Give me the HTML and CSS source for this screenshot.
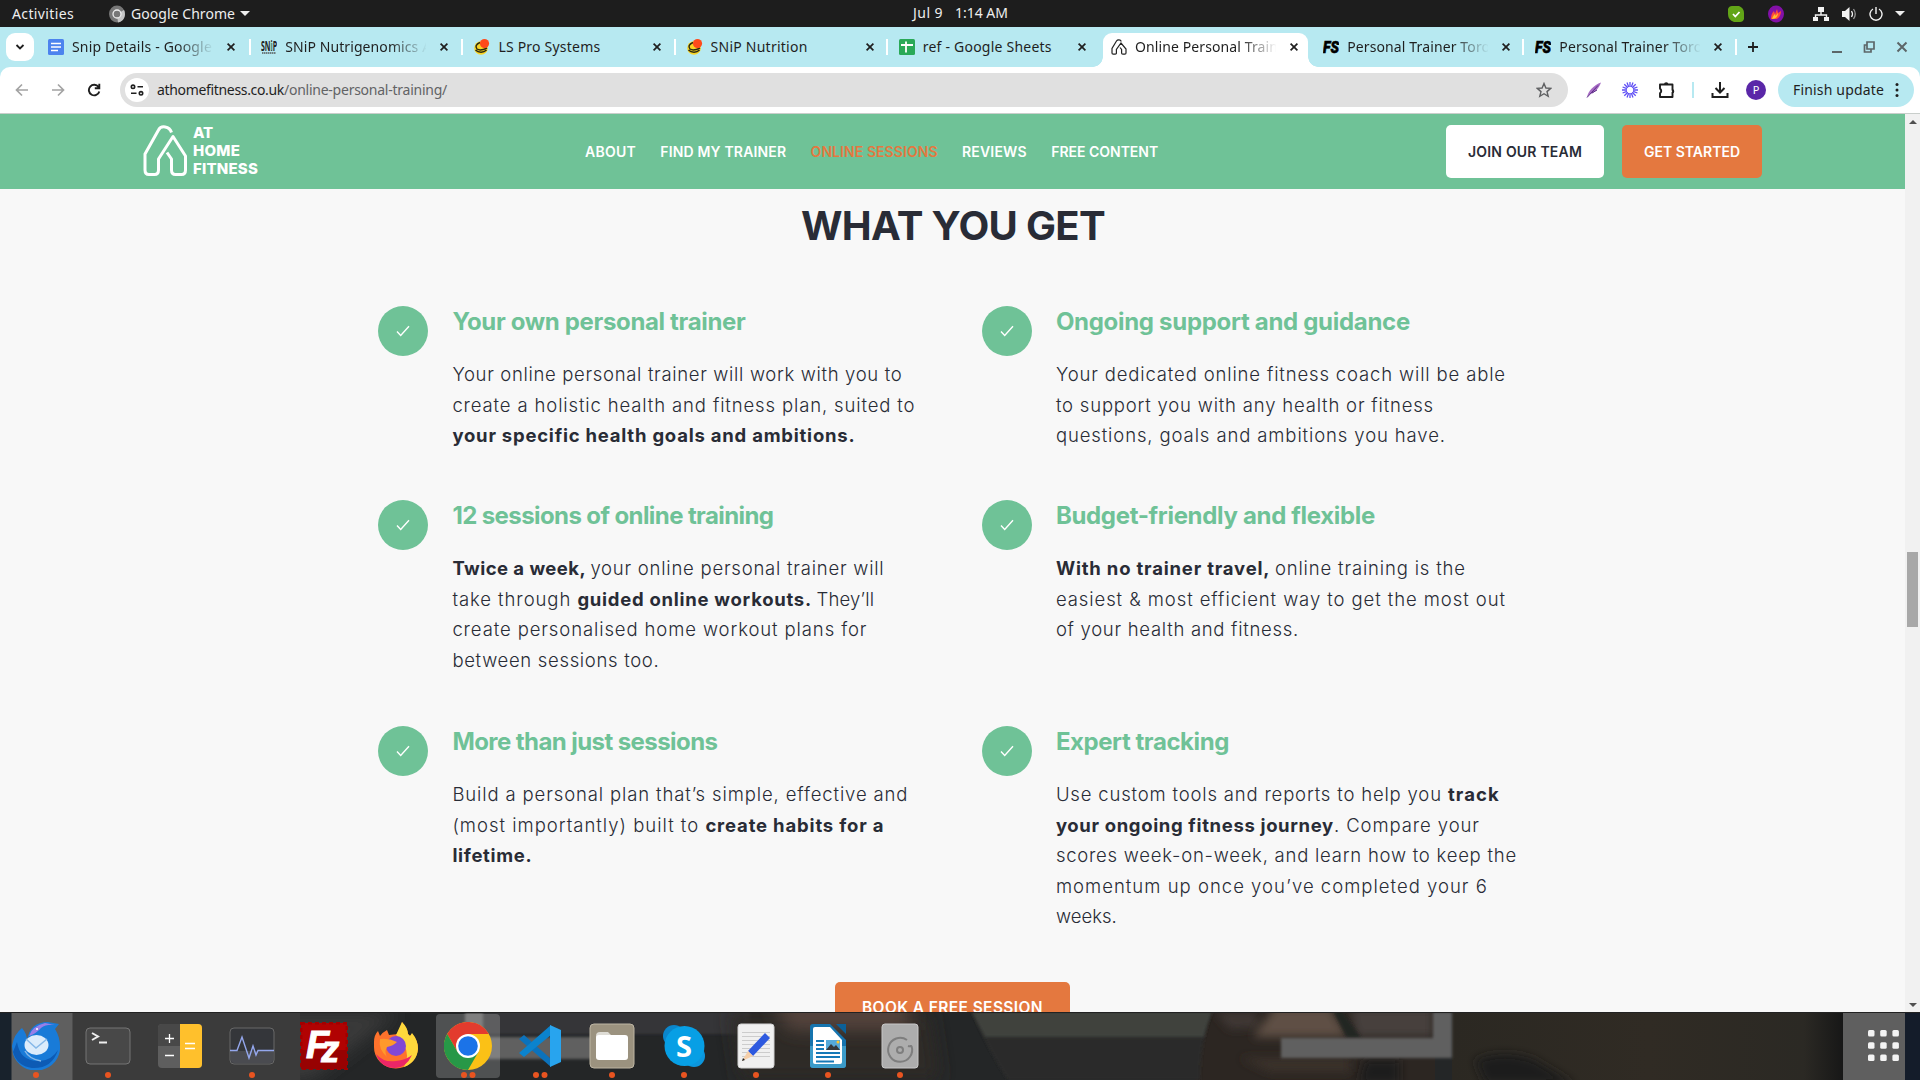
FILE: index.html
```html
<!DOCTYPE html>
<html lang="en">
<head>
<meta charset="utf-8">
<title>Online Personal Training</title>
<link rel="stylesheet" href="styles.css">
</head>
<body>
<svg class="defs" width="0" height="0">
  <defs>
    <symbol id="close" viewBox="0 0 16 16"><path d="M4.6 4.6l6.8 6.8M11.4 4.6l-6.8 6.8" stroke="currentColor" stroke-width="1.7"/></symbol>
    <symbol id="snip" viewBox="0 0 16 16"><circle cx="7" cy="9" r="6.8" fill="#f9d423"/><path d="M6 3.5C2 5 1 8 3 10c3 2 8 0 10-1M1.500 11c3 3 8 3 11 0" fill="none" stroke="#2a2a12" stroke-width="1.5"/><circle cx="10.500" cy="4.600" r="4.600" fill="#ff4a1c"/></symbol>
    <symbol id="check" viewBox="0 0 14 14"><path d="M1 7.600l3.700 3.900L13 2.300" fill="none" stroke="#fff" stroke-width="1.400"/></symbol>
    <symbol id="logo" viewBox="0 0 44 51"><path d="M28.500 7.500C26.500 1 18 0 15.500 5L2 29v16c0 3 1.500 4.500 4 4.500h5.500c2.500 0 4-1.500 4-4.500V34L30 11.500 42.500 31v14c0 3-1.500 4.500-4 4.500h-6c-2.500 0-4-1.500-4-4.500V34l-4.500-6.500" fill="none" stroke="currentColor" stroke-width="3" stroke-linejoin="round"/></symbol>
  </defs>
</svg>

<div class="topbar">
  <div class="top-left">
    <span class="fit" data-w="62">Activities</span>
    <svg class="top-chrome" width="16" height="18" viewBox="0 0 16 18"><ellipse cx="8" cy="9" rx="8" ry="8.500" fill="#777"/><path d="M8 9l7-4a8 8.500 0 0 1-6 12.500z" fill="#c4c4c4"/><circle cx="8" cy="9" r="4" fill="#777" stroke="#eee" stroke-width="1.300"/></svg>
    <span class="fit" data-w="104">Google Chrome</span>
    <i class="caret"></i>
  </div>
  <div class="clock"><span class="fit" data-w="30">Jul 9</span><span class="fit" data-w="53">1:14 AM</span></div>
  <div class="tray">
    <svg width="16" height="18" viewBox="0 0 16 18"><path d="M4 1h7q5 2 5 7v6q-1 3-4 3H6q-6-2-6-8V4q1-3 4-3z" fill="#62a517"/><path d="M5 9l2.300 2.500L11.500 7" fill="none" stroke="#fff" stroke-width="1.800"/></svg>
    <svg width="16" height="18" viewBox="0 0 16 18"><ellipse cx="8" cy="9" rx="8" ry="8.500" fill="#8310a8"/><path d="M3 14c0-4 1-6 3-8l1 3 2-5 1 4 3-2c0 4-2 8-6 8z" fill="#ff4b3a"/><path d="M4 14c1-3 2-4 3-5l.5 2L10 8c0 3-2 6-6 6z" fill="#ffc02e"/></svg>
    <svg width="16" height="16" viewBox="0 0 16 16" fill="#f2f2f2"><path d="M5 1h6v5H5zM0 11h5v4H0zM11 11h5v4h-5z"/><path d="M8 5v4M2.500 12V9h11v3" fill="none" stroke="#f2f2f2" stroke-width="1.400"/></svg>
    <svg width="15" height="16" viewBox="0 0 15 16"><path d="M0 5h3l4.500-4v14L3 11H0z" fill="#f2f2f2"/><path d="M9.500 5q2 3 0 6" fill="none" stroke="#f2f2f2" stroke-width="1.300"/><path d="M11.500 3q3.500 5 0 10" fill="none" stroke="#999" stroke-width="1.300"/></svg>
    <svg width="14" height="16" viewBox="0 0 14 16"><path d="M4 3a6 6 0 1 0 6 0M7 1v7" fill="none" stroke="#f2f2f2" stroke-width="1.400"/></svg>
    <i class="caret"></i>
  </div>
</div>

<div class="tabs">
  <div class="tab-search"><svg width="10" height="8" viewBox="0 0 10 8"><path d="M1.500 2L5 5.500 8.500 2" fill="none" stroke="#1f1f1f" stroke-width="1.800"/></svg></div>
  <div class="tab">
    <svg class="fav" viewBox="0 0 16 16"><rect width="16" height="16" rx="1.500" fill="#4c83ee"/><path d="M3 4.500h10M3 8h10M3 11.500h7" stroke="#fff" stroke-width="1.600"/></svg>
    <span class="title fade"><span class="fit" data-w="140">Snip Details - Google</span></span><svg class="x"><use href="#close"/></svg></div>
  <div class="tab">
    <svg class="fav" viewBox="0 0 16 16"><text class="snp" x="0" y="11.500" textLength="16" lengthAdjust="spacingAndGlyphs">SNiP</text><path d="M1 14h14" stroke="#6d7d80" stroke-width="2" stroke-dasharray="1.500 .5"/><path d="M10 3v8" stroke="#8fd6b5"/></svg>
    <span class="title fade"><span class="fit" data-w="146">SNiP Nutrigenomics A</span></span><svg class="x"><use href="#close"/></svg></div>
  <div class="tab"><svg class="fav"><use href="#snip"/></svg><span class="title"><span class="fit" data-w="102">LS Pro Systems</span></span><svg class="x"><use href="#close"/></svg></div>
  <div class="tab"><svg class="fav"><use href="#snip"/></svg><span class="title"><span class="fit" data-w="97">SNiP Nutrition</span></span><svg class="x"><use href="#close"/></svg></div>
  <div class="tab plain"><svg class="fav" viewBox="0 0 16 16"><rect width="16" height="16" rx="1.500" fill="#2aa957"/><path d="M2 6h12M7 2.500v11" stroke="#fff" stroke-width="1.800"/></svg><span class="title"><span class="fit" data-w="129">ref - Google Sheets</span></span><svg class="x"><use href="#close"/></svg></div>
  <div class="tab active plain"><svg class="fav dark" viewBox="0 0 16 16"><path d="M10.300 2.500C9.500.5 6.500.5 5.500 2L1 9.500V14q0 1.200 1.200 1.200h2q1.200 0 1.200-1.200v-3.500L10 4l5 6v4q0 1.200-1.200 1.200h-2q-1.200 0-1.200-1.200v-3.500L9 8.500" fill="none" stroke="#222" stroke-width="1.200"/></svg><span class="title fade"><span class="fit" data-w="143">Online Personal Train</span></span><svg class="x"><use href="#close"/></svg></div>
  <div class="tab"><svg class="fav" viewBox="0 0 16 16"><text class="fs" x="0" y="14" textLength="16" lengthAdjust="spacingAndGlyphs">FS</text></svg><span class="title fade"><span class="fit" data-w="143">Personal Trainer Toro</span></span><svg class="x"><use href="#close"/></svg></div>
  <div class="tab"><svg class="fav" viewBox="0 0 16 16"><text class="fs" x="0" y="14" textLength="16" lengthAdjust="spacingAndGlyphs">FS</text></svg><span class="title fade"><span class="fit" data-w="143">Personal Trainer Toro</span></span><svg class="x"><use href="#close"/></svg></div>
  <svg class="plus" width="12" height="12" viewBox="0 0 12 12"><path d="M6 1v10M1 6h10" stroke="#1f1f1f" stroke-width="1.800"/></svg>
  <div class="win">
    <svg width="12" height="12" viewBox="0 0 12 12"><path d="M1 11h10" stroke="#5c6668" stroke-width="2"/></svg>
    <svg width="12" height="12" viewBox="0 0 12 12"><path d="M4 1h7v7H4zM4 4H1.500v7H8V8" fill="none" stroke="#5c6668" stroke-width="1.700"/></svg>
    <svg width="12" height="12" viewBox="0 0 12 12"><path d="M1.500 1.500l9 9M10.500 1.500l-9 9" stroke="#5c6668" stroke-width="2"/></svg>
  </div>
</div>

<div class="toolbar-wrap"><div class="toolbar">
  <div class="nav-icons">
    <svg width="14" height="14" viewBox="0 0 14 14"><path d="M13 7H2M7 1.500L1.500 7 7 12.500" fill="none" stroke="#a3a3a3" stroke-width="1.700"/></svg>
    <svg width="14" height="14" viewBox="0 0 14 14"><path d="M1 7h11M7 1.500L12.500 7 7 12.500" fill="none" stroke="#a3a3a3" stroke-width="1.700"/></svg>
    <svg width="14" height="14" viewBox="0 0 14 14"><path d="M11.500 4A5.300 5.300 0 1 0 12.300 8.500M12.300 .8v4.400H7.800" fill="none" stroke="#1f1f1f" stroke-width="1.900"/></svg>
  </div>
  <div class="url">
    <span class="site"><svg width="14" height="12" viewBox="0 0 14 12"><g fill="none" stroke="#1f1f1f" stroke-width="1.600"><circle cx="3" cy="2.800" r="1.700"/><path d="M7.500 2.800H13M1 9.300h5.500"/><circle cx="11" cy="9.300" r="1.700"/></g></svg></span>
    <span class="fit" data-w="127">athomefitness.co.uk</span><span class="fit path" data-w="163">/online-personal-training/</span>
    <svg class="star" width="16" height="16" viewBox="0 0 16 16"><path d="M8 1.500l1.900 4.500 4.800.4-3.700 3.200 1.200 4.700L8 11.700l-4.200 2.600L5 9.600 1.300 6.400 6.100 6z" fill="none" stroke="#5f6062" stroke-width="1.400"/></svg>
  </div>
  <svg class="ic feather" width="16" height="16" viewBox="0 0 16 16"><path d="M1 15.500C2 9 8 3 15 .5 13 6 9 11 4 12z" fill="#a66bc4"/><path d="M1 15.500L12 3.500M6 11l5-3" stroke="#5c2f86" fill="none"/></svg>
  <svg class="ic burst" width="16" height="16" viewBox="0 0 16 16"><path d="M8 0v5M8 11V16M0 8h5M11 8H16M2.300 2.300l3.500 3.500M10.200 10.200l3.500 3.500M13.700 2.300l-3.500 3.500M5.800 10.200l-3.500 3.500M5 .6l1.700 4.300M9.300 11.100l1.700 4.300M11 .6l-1.700 4.300M6.700 11.100l-1.700 4.300M.6 5l4.300 1.700M11.100 9.300l4.300 1.700M.6 11l4.300-1.700M11.100 6.700l4.300-1.700" stroke="#5f4ff5" stroke-width="1.300"/></svg>
  <svg class="ic puzzle" width="18" height="18" viewBox="0 0 18 18"><path d="M2 3.500h12.500v5.500a1.500 1.500 0 0 1 0 2.500V16H2v-3.700q2.500-2.300 0-4.800z" fill="none" stroke="#1f1f1f" stroke-width="1.900" stroke-linejoin="round"/><path d="M6 3.500a2.200 2.200 0 0 1 4.400 0zM14.500 8a2.200 2.200 0 0 1 0 4.300z" fill="#1f1f1f"/></svg>
  <i class="bar"></i>
  <svg class="ic down" width="18" height="18" viewBox="0 0 18 18"><path d="M9 1v10M4.500 7L9 11.500 13.500 7M1.500 12v4h15v-4" fill="none" stroke="#1f1f1f" stroke-width="2"/></svg>
  <span class="avatar">P</span>
  <div class="update"><span class="fit" data-w="91">Finish update</span><svg width="4" height="16" viewBox="0 0 4 16" fill="#1f1f1f"><circle cx="2" cy="2.500" r="1.500"/><circle cx="2" cy="8" r="1.500"/><circle cx="2" cy="13.500" r="1.500"/></svg></div>
</div></div>

<div class="view">
  <main class="page">
    <header class="site-header">
      <div class="brand"><svg width="44" height="51"><use href="#logo"/></svg>
        <div class="brand-text"><div><span class="fit" data-w="20">AT</span></div><div><span class="fit" data-w="47">HOME</span></div><div><span class="fit" data-w="65">FITNESS</span></div></div></div>
      <nav><a class="fit" data-w="51">ABOUT</a><a class="fit" data-w="126">FIND MY TRAINER</a><a class="fit current" data-w="127">ONLINE SESSIONS</a><a class="fit" data-w="65">REVIEWS</a><a class="fit" data-w="107">FREE CONTENT</a></nav>
      <div class="actions"><a class="btn white"><span class="fit" data-w="114">JOIN OUR TEAM</span></a><a class="btn orange"><span class="fit" data-w="96">GET STARTED</span></a></div>
    </header>
    <h1><span class="fit" data-w="304">WHAT YOU GET</span></h1>
    <section class="features">
      <article><span class="tick"><svg width="14" height="14"><use href="#check"/></svg></span><div>
        <h2><span class="fit" data-w="293">Your own personal trainer</span></h2>
        <p><span class="fit" data-w="450">Your online personal trainer will work with you to</span><br><span class="fit" data-w="463">create a holistic health and fitness plan, suited to</span><br><b class="fit" data-w="403">your specific health goals and ambitions.</b></p></div></article>
      <article><span class="tick"><svg width="14" height="14"><use href="#check"/></svg></span><div>
        <h2><span class="fit" data-w="354">Ongoing support and guidance</span></h2>
        <p><span class="fit" data-w="450">Your dedicated online fitness coach will be able</span><br><span class="fit" data-w="378">to support you with any health or fitness</span><br><span class="fit" data-w="390">questions, goals and ambitions you have.</span></p></div></article>
      <article><span class="tick"><svg width="14" height="14"><use href="#check"/></svg></span><div>
        <h2><span class="fit" data-w="321">12 sessions of online training</span></h2>
        <p><b class="fit" data-w="138">Twice a week, </b><span class="fit" data-w="294">your online personal trainer will</span><br><span class="fit" data-w="125">take through </span><b class="fit" data-w="239">guided online workouts. </b><span class="fit" data-w="58">They’ll</span><br><span class="fit" data-w="415">create personalised home workout plans for</span><br><span class="fit" data-w="207">between sessions too.</span></p></div></article>
      <article><span class="tick"><svg width="14" height="14"><use href="#check"/></svg></span><div>
        <h2><span class="fit" data-w="319">Budget-friendly and flexible</span></h2>
        <p><b class="fit" data-w="219">With no trainer travel, </b><span class="fit" data-w="191">online training is the</span><br><span class="fit" data-w="450">easiest &amp; most efficient way to get the most out</span><br><span class="fit" data-w="243">of your health and fitness.</span></p></div></article>
      <article><span class="tick"><svg width="14" height="14"><use href="#check"/></svg></span><div>
        <h2><span class="fit" data-w="265">More than just sessions</span></h2>
        <p><span class="fit" data-w="456">Build a personal plan that’s simple, effective and</span><br><span class="fit" data-w="253">(most importantly) built to </span><b class="fit" data-w="179">create habits for a</b><br><b class="fit" data-w="80">lifetime.</b></p></div></article>
      <article><span class="tick"><svg width="14" height="14"><use href="#check"/></svg></span><div>
        <h2><span class="fit" data-w="173">Expert tracking</span></h2>
        <p><span class="fit" data-w="392">Use custom tools and reports to help you </span><b class="fit" data-w="52">track</b><br><b class="fit" data-w="278">your ongoing fitness journey</b><span class="fit" data-w="146">. Compare your</span><br><span class="fit" data-w="461">scores week-on-week, and learn how to keep the</span><br><span class="fit" data-w="432">momentum up once you’ve completed your 6</span><br><span class="fit" data-w="61">weeks.</span></p></div></article>
    </section>
    <a class="book"><span class="fit" data-w="181">BOOK A FREE SESSION</span></a>
  </main>
  <div class="scroll"><i class="up"></i><i class="thumb"></i><i class="dn"></i></div>
</div>

<footer class="dock">
  <svg class="wall" width="1920" height="68" viewBox="0 0 1920 68" preserveAspectRatio="none">
    <defs>
      <filter id="b2" x="-20%" y="-50%" width="140%" height="200%"><feGaussianBlur stdDeviation="1.500"/></filter>
      <filter id="b5" x="-40%" y="-80%" width="180%" height="260%"><feGaussianBlur stdDeviation="5"/></filter>
      <filter id="b8" x="-40%" y="-80%" width="180%" height="260%"><feGaussianBlur stdDeviation="9"/></filter>
      <linearGradient id="right"><stop offset="0" stop-color="#2b2822"/><stop offset=".5" stop-color="#302b24"/><stop offset=".9" stop-color="#2b2924"/><stop offset="1" stop-color="#171717"/></linearGradient>
    </defs>
    <rect width="1920" height="68" fill="#242627"/>
    <path d="M0 0H400L310 68H0z" fill="#3b3b3b" filter="url(#b8)"/>
    <rect x="60" width="240" height="68" fill="#3b3b3b"/>
    <rect width="12" height="68" fill="#18222c"/><rect x="11.500" width="61" height="68" fill="#5f5f5f"/>
    <path d="M480 0h270v22H480z" fill="#343638" filter="url(#b2)"/>
    <path d="M465 0h18v25h110v22H465z" fill="#606060" filter="url(#b2)"/>
    <path d="M730 0h200l10 68H740z" fill="#2e2926" filter="url(#b8)"/>
    <path d="M770 -10h140v28H790z" fill="#57443c" filter="url(#b8)"/>
    <path d="M1200 0h235v68h-240z" fill="#2c2622"/>
    <path d="M972 0h240q-12 30-12 68h-192q-20-30-36-68z" fill="#2c2c2a" filter="url(#b2)"/>
    <path d="M972 0h240q-6 14-8 25H985z" fill="#40423e" filter="url(#b2)"/>
    <path d="M1215 0h40l5 15-30 2z" fill="#413835" filter="url(#b5)"/>
    <path d="M1275 -5h55l18 30h-95z" fill="#5e5045" filter="url(#b5)"/>
    <path d="M1240 46h110v14h-80z" fill="#3b312c" filter="url(#b5)"/>
    <path d="M1350 -4h83v29h-76z" fill="#46403d" filter="url(#b5)"/>
    <path d="M1334 0h9l18 26h-14z" fill="#242523" filter="url(#b2)"/>
    <path d="M1365 48h34v24h-40z" fill="#1d1d1c" filter="url(#b5)"/>
    <rect x="1452" width="391" height="68" fill="url(#right)"/>
    <path d="M1475 48q30-12 60 0l40 24h-90z" fill="#1f1e1c" filter="url(#b5)"/>
    <path d="M1433 0h19v46h-171V26h152z" fill="#606060" filter="url(#b2)"/>
    <rect x="1843" width="62" height="68" fill="#5f5f5f"/><rect x="1905" width="15" height="68" fill="#141c2a"/>
    <path d="M0 .5h1920" stroke="#222"/>
  </svg>
  <div class="apps">
    <div class="app d1"><svg viewBox="0 0 48 48"><path d="M0 24Q2 12 10 6q5 6 5 12Q18 0 36 0l11 2-4 5q5 8 5 17A24 23 0 0 1 1 32z" fill="#197bd8"/><path d="M17 14Q20 4 33 1l10 2q-9-1-14 3-4 5-12 8z" fill="#987fe8"/><path d="M1 30q4 14 19 16 20 1 26-18-6 10-18 11Q8 40 5 20z" fill="#0d5bb5"/><ellipse cx="24.500" cy="23" rx="12" ry="10" fill="#dcecfb"/><path d="M14 17l10 9 11-9M13 29q4 8 16 10" fill="none" stroke="#86b8e8" stroke-width="1.500"/><circle cx="25" cy="7" r="1" fill="#fff"/></svg></div>
    <div class="app d1"><svg viewBox="0 0 48 48"><rect x="2" y="6" width="44" height="36" rx="4" fill="#484848" stroke="#757575"/><path d="M8 11l6 3.500L8 18M15 20.500h8" fill="none" stroke="#eee" stroke-width="2"/></svg></div>
    <div class="app"><svg viewBox="0 0 48 48"><rect x="2" y="2" width="44" height="44" rx="4" fill="#5e5e5e"/><path d="M2 6q0-4 4-4h18v22H2z" fill="#484848"/><path d="M24 2h18q4 0 4 4v36q0 4-4 4H24z" fill="#ffc02c"/><path d="M9 16.500h9M13.500 12v9M9 33.500h9M29 21.500h10M29 26.500h10" stroke="#fff" stroke-width="1.300"/></svg></div>
    <div class="app d1"><svg viewBox="0 0 48 48"><rect x="2" y="6" width="44" height="36" rx="4" fill="#34363a" stroke="#686868"/><path d="M3 29h42v9q0 3-3 3H6q-3 0-3-3z" fill="#4a4b50"/><path d="M2 28.500h7L14 15l7 21 4-12 3 9 2-4.500h16" fill="none" stroke="#94a7ed" stroke-width="1.400"/></svg></div>
    <div class="app"><svg viewBox="0 0 48 48"><rect x="1" y="1" width="46" height="46" fill="#b10202" stroke="#a10000" stroke-width="3" stroke-dasharray="4 3"/><path d="M1 28h46v19H1z" fill="#980202"/><text class="fz" x="6" y="36">F<tspan class="zz" dx="-8" dy="4">z</tspan></text></svg></div>
    <div class="app"><svg viewBox="0 0 48 48"><path d="M2 20q0-7 4-11l2 5q3-4 7-6l2 5 9-1q3-8 4-12 5 6 6 12l2 2 2-2q6 7 6 14A22 21 0 0 1 2 25z" fill="#ff722c"/><path d="M30 0q6 6 6 12l2 2 2-3q6 7 6 16-1 13-14 18 6-12 0-22-3-7-8-10z" fill="#ffd83c"/><path d="M4 32q8 9 20 7 10-1 16-6-6 13-17 13Q9 46 4 32z" fill="#ec2667"/><circle cx="24" cy="24" r="10" fill="#8148d5"/><path d="M8 17q9-1 17 3-4 4-10 5-3 5 0 10-9-8-7-18z" fill="#ff992b"/></svg></div>
    <div class="app d2 open"><svg viewBox="0 0 48 48"><circle cx="24" cy="24" r="24" fill="#fbc116"/><path d="M3.200 12A24 24 0 0 1 44.800 12H24L13.600 30z" fill="#e33b2e"/><path d="M3.200 12A24 24 0 0 0 24 48l10.400-18H13.600z" fill="#279847"/><circle cx="24" cy="24" r="12" fill="#fff"/><circle cx="24" cy="24" r="9.800" fill="#1b73e8"/></svg></div>
    <div class="app d2"><svg viewBox="0 0 48 48"><path d="M3 17l5-4 27 24v8z" fill="#0c72bb"/><path d="M3 31l5 4L35 13V3z" fill="#0b83cd"/><path d="M34 3l11 5v32l-11 5z" fill="#28a4ee"/></svg></div>
    <div class="app d1"><svg viewBox="0 0 48 48"><rect x="2" y="2" width="44" height="44" rx="4" fill="#9b927f" stroke="#bdb5a3"/><path d="M8 14q0-4 4-4h8l3 3h14v9H8z" fill="#dedcd5"/><rect x="8" y="13" width="32" height="25" rx="3" fill="#fff"/></svg></div>
    <div class="app d1"><svg viewBox="0 0 48 48"><circle cx="14" cy="14" r="11" fill="#0b86cc"/><circle cx="34" cy="34" r="11" fill="#0c96dd"/><circle cx="24.500" cy="24" r="20" fill="#079fe5"/><text class="sk" x="24" y="34.500">S</text></svg></div>
    <div class="app d1"><svg viewBox="0 0 48 48"><rect x="6" y="2" width="36" height="44" rx="3" fill="#f0f0f0" stroke="#d2d2d2"/><path d="M10 10.500h28M10 14.500h28M10 18.500h28M10 22.500h28M10 26.500h28M10 30.500h28M10 34.500h28" stroke="#ccc"/><path d="M16 29L33 11l5 5-17 18z" fill="#2d59df"/><path d="M16 29l5 5-11 5z" fill="#f5cfaa"/><path d="M11 36l2 2-3 1z" fill="#222"/></svg></div>
    <div class="app d1"><svg viewBox="0 0 48 48"><path d="M9 2h17l16 16v25q0 3-3 3H9q-3 0-3-3V5q0-3 3-3z" fill="#1674ae"/><path d="M6 24h36v19q0 3-3 3H9q-3 0-3-3z" fill="#3b9bc9"/><path d="M11 5h15l12 13v22q0 2-2 2H11q-2 0-2-2V7q0-2 2-2z" fill="#fff"/><path d="M32 2h10v10z" fill="#0b6098"/><path d="M12 19h8M12 23h8M12 27h8M12 31h24M12 35h24M12 39.500h18" stroke="#1679b7" stroke-width="2"/><rect x="22" y="18" width="14" height="10" fill="#55a9d9"/><path d="M22 28l5-6 3 3 2-2 4 5z" fill="#36383a"/><circle cx="34" cy="20" r="1.500" fill="#ffc72b"/></svg></div>
    <div class="app d1"><svg viewBox="0 0 48 48"><rect x="6" y="2" width="36" height="44" rx="3" fill="#adadad" stroke="#c8c8c8"/><path d="M31 18a12 12 0 1 0 4.500 6M35 23q0 2-3 1" fill="none" stroke="#7e7e7e" stroke-width="2"/><circle cx="24" cy="28" r="3" fill="none" stroke="#7e7e7e" stroke-width="2"/></svg></div>
  </div>
  <svg class="grid" width="31" height="31" viewBox="0 0 31 31" fill="#f3f3f3"><path d="M0 1.500Q0 0 1.500 0h3.500q1.500 0 1.500 1.500V5q0 1.500-1.500 1.500H1.500Q0 6.500 0 5z" id="g"/><use href="#g" x="12.200"/><use href="#g" x="24.400"/><use href="#g" y="12.200"/><use href="#g" x="12.200" y="12.200"/><use href="#g" x="24.400" y="12.200"/><use href="#g" y="24.400"/><use href="#g" x="12.200" y="24.400"/><use href="#g" x="24.400" y="24.400"/></svg>
</footer>
<script src="fit.js"></script>
</body>
</html>
```
FILE: styles.css
```css
* { box-sizing: border-box; }
body { margin: 0; width: 1920px; height: 1080px; overflow: hidden; display: flex; flex-direction: column; font: 14px "Noto Sans", sans-serif; color: #1f1f1f; }
svg { flex: none; display: block; }
.defs { position: absolute; }
.fit { white-space: pre; }
i { display: block; }

.topbar { height: 27px; flex: none; background: #1d1d1d; color: #eee; display: grid; grid-template-columns: 913px 1fr 192px; line-height: 27px; }
.top-left { display: flex; align-items: center; padding-left: 12px; }
.top-chrome { margin: 0 6px 0 35px; }
.caret { width: 0; border: 5px solid transparent; border-top-color: #eee; border-bottom: 0; }
.top-left .caret { margin-left: 5px; }
.clock { display: flex; gap: 12px; line-height: 26px; }
.tray { display: flex; align-items: center; }
.tray svg:nth-child(2) { margin-left: 24px; }
.tray svg:nth-child(3) { margin-left: 29px; }
.tray svg:nth-child(4) { margin-left: 13px; }
.tray svg:nth-child(5) { margin-left: 12px; }
.tray .caret { margin-left: 12px; }

.tabs { height: 40px; flex: none; background: #b7e9f1; display: flex; align-items: center; padding-left: 6px; }
.tab-search { width: 28px; height: 28px; margin-right: 4px; border-radius: 9px; background: #fff; display: grid; place-items: center; }
.tab { width: 212.200px; height: 40px; flex: none; padding-left: 11px; display: flex; align-items: center; position: relative; }
.tab:nth-child(2) { padding-left: 10px; }
.tab::after { content: ""; position: absolute; right: -1px; top: 12px; width: 2px; height: 16px; background: #fff; }
.tab.plain::after { display: none; }
.fav { width: 16px; height: 16px; margin-right: 8px; }
.title { width: 141px; overflow: hidden; line-height: 22px; }
.fade { -webkit-mask-image: linear-gradient(90deg, #000 105px, transparent 142px); mask-image: linear-gradient(90deg, #000 105px, transparent 142px); }
.x { width: 16px; height: 16px; margin-left: 10px; }
.tab:nth-child(n+4) { padding-left: 12px; }
.active { z-index: 1; }
.active::before { content: ""; position: absolute; z-index: -1; left: 4px; right: 3px; top: 6px; bottom: 0; background: #fff; border-radius: 9px 9px 0 0; }
.active.plain::after { display: block; z-index: -1; background: radial-gradient(circle at 0 0, transparent 9.500px, #fff 10px) left / 10px 10px no-repeat, radial-gradient(circle at 100% 0, transparent 9.500px, #fff 10px) right / 10px 10px no-repeat; left: -6px; right: -7px; width: auto; top: 30px; height: 10px; }
.snp { font: bold 15px "Open Sans", sans-serif; fill: #222; }
.fs { font: italic 900 17px Roboto, sans-serif; fill: #000; stroke: #000; stroke-width: .6px; }
.plus { margin-left: 11px; }
.win { display: flex; gap: 20.500px; margin-left: 72px; }

.toolbar-wrap { flex: none; background: #b7e9f1; }
.toolbar { height: 47px; background: #fff; border-radius: 10px 10px 0 0; border-bottom: 1px solid #c9cecb; display: flex; align-items: center; padding-left: 15px; }
.nav-icons { display: flex; gap: 22px; width: 105px; }
.url { width: 1448px; height: 34px; border-radius: 17px; background: #e0e0e0; display: flex; align-items: center; padding: 0 16px 0 5px; }
.url .fit { padding-bottom: 2px; }
.site { width: 24px; height: 24px; margin-right: 8px; border-radius: 12px; background: #fff; display: grid; place-items: center; }
.path { color: #626365; }
.star { margin-left: auto; }
.feather { margin-left: 18px; }
.burst { margin-left: 20px; }
.puzzle { margin-left: 20px; }
.bar { width: 2px; height: 16px; background: #b7e9f1; margin-left: 16px; }
.down { margin-left: 17px; }
.avatar { width: 20px; height: 20px; margin-left: 17px; border-radius: 50%; background: #5a27a8; color: #fff; font-size: 11px; line-height: 20px; text-align: center; }
.update { width: 136px; height: 34px; margin-left: 12px; border-radius: 17px; background: #b7e9f1; display: flex; align-items: center; justify-content: space-between; padding: 0 15px; }
.update .fit { padding-bottom: 2px; }

.view { height: 898px; flex: none; display: flex; overflow: hidden; }
.page { width: 1905px; background: #f8f8f8; color: #292c36; font-family: Inter, "Open Sans", sans-serif; }
.site-header { height: 75px; background: #6fc297; color: #fff; display: grid; grid-template-columns: 442px 861px 1fr; padding-left: 143px; align-items: start; }
.brand { display: flex; gap: 6px; padding-top: 11px; }
.brand-text { font-weight: 800; font-size: 15px; line-height: 17.800px; margin-top: -1px; }
.site-header nav { display: flex; gap: 24.300px; font-weight: 600; font-size: 14px; line-height: 76px; }
.current { color: #e4783f; }
.actions { display: flex; gap: 18px; padding-top: 11px; }
.btn { height: 53px; padding: 0 22px; border-radius: 5px; font-weight: 600; font-size: 14px; line-height: 53px; }
.white { background: #fff; color: #292c36; }
.orange { background: #e4783f; }
h1 { margin: 0; height: 117px; padding-left: 801px; font-size: 40px; font-weight: 700; line-height: 73px; }
.features { display: grid; grid-template-columns: 603.500px 603px; grid-template-rows: 194px 226px 256px; padding-left: 378px; }
article { display: flex; gap: 24.400px; }
.tick { width: 50px; height: 50px; flex: none; border-radius: 50%; background: #6fc297; display: grid; place-items: center; }
h2 { margin: 0 0 22px; font-size: 24px; line-height: 31px; font-weight: 700; color: #6fc297; }
p { margin: 0; font-size: 18.500px; line-height: 30.500px; font-weight: 300; white-space: nowrap; }
b { font-weight: 700; }
.book { display: block; width: 235px; height: 60px; margin-left: 835px; padding-left: 27px; border-radius: 5px; background: #e4783f; color: #fff; font-weight: 600; font-size: 15.500px; line-height: 51px; }
.scroll { width: 15px; background: #f1f1f1; display: flex; flex-direction: column; align-items: center; }
.up { border: 4px solid transparent; border-top: 0; border-bottom-color: #505050; margin-top: 6px; }
.thumb { width: 11px; height: 75px; background: #a8a8a8; margin-top: 428px; }
.dn { border: 4px solid transparent; border-bottom: 0; border-top-color: #505050; margin-top: auto; margin-bottom: 5px; }

.dock { height: 68px; flex: none; display: flex; align-items: center; justify-content: space-between; position: relative; overflow: hidden; }
.wall { position: absolute; inset: 0; }
.apps { display: flex; position: relative; }
.app { width: 72px; height: 68px; display: grid; place-items: center; position: relative; }
.app svg { width: 48px; height: 48px; position: relative; }
.open::before { content: ""; position: absolute; left: 4px; top: 2px; width: 64px; height: 64px; border-radius: 4px; background: rgba(255, 255, 255, .2); }
.d1::after, .d2::after { content: ""; position: absolute; width: 6px; height: 6px; border-radius: 50%; background: #e95420; left: 33px; top: 60px; }
.d2::after { left: 29px; box-shadow: 8.500px 0 #e95420; }
.fz { font: italic 900 38px "Liberation Sans", sans-serif; fill: #fff; stroke: #fff; }
.zz { font-size: 36px; }
.sk { font: bold 29px "Open Sans", sans-serif; fill: #fff; text-anchor: middle; }
.grid { position: relative; margin-right: 21px; margin-top: -1px; }
```
FILE: fit.js
```js
// Spread the letters of each label so that it fills its set width.
document.querySelectorAll('.fit').forEach(function (el) {
  var width = parseFloat(el.dataset.w);
  var natural = el.getBoundingClientRect().width;
  el.style.letterSpacing = ((width - natural) / el.textContent.length) + 'px';
});
```
